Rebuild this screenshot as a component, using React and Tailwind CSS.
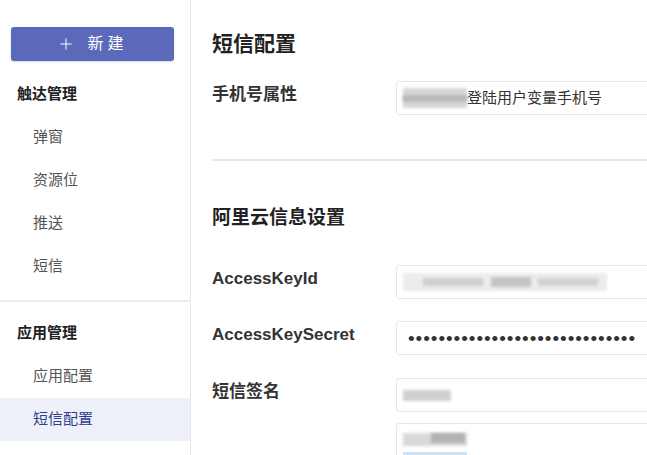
import React from 'react';
import { Plus } from 'lucide-react';

const font = { fontFamily: '"Liberation Sans", "Noto Sans CJK SC", sans-serif' };

const groups = [
  { title: '触达管理', items: ['弹窗', '资源位', '推送', '短信'] },
  { title: '应用管理', items: ['应用配置', '短信配置'] },
];

const Blur = ({ className }) => <div className={`blur-[1.5px] ${className}`} />;

const Field = ({ label, children, className = '' }) => (
  <div className={`flex items-start ${className}`}>
    <div className="w-[184px] shrink-0 text-[17px] leading-[27px] font-semibold text-[#333]">{label}</div>
    <div className="w-[320px] shrink-0 h-[34px] border border-[#e6e6e6] rounded-[3px] bg-white flex items-center pl-[6px]">
      {children}
    </div>
  </div>
);

const Sidebar = () => (
  <div className="w-[191px] shrink-0 border-r border-[#e8e8e8] bg-white">
    <div className="pt-[27px] px-[11px]">
      <button className="w-[163px] h-[34px] rounded-[3px] bg-[#5b69bb] text-white flex items-center justify-center gap-[12px] shadow-[0_1px_2px_rgba(0,0,0,0.15)]">
        <Plus size={18} strokeWidth={1.3} />
        <span className="text-[16px] tracking-[4px]">新建</span>
      </button>
    </div>
    {groups.map((g, gi) => (
      <div key={g.title} className={gi === 0 ? 'mt-[12px] pb-[12px] border-b-2 border-[#ececec]' : 'pt-[10px]'}>
        <div className="h-[43px] flex items-center pl-[17px] text-[15px] font-bold text-[#222]">{g.title}</div>
        {g.items.map((item) => {
          const active = item === '短信配置';
          return (
            <div
              key={item}
              className={`h-[43px] flex items-center pl-[33px] text-[15px] ${active ? 'bg-[#eef1f9] text-[#2f3d8c]' : 'text-[#555]'}`}
            >
              {item}
            </div>
          );
        })}
      </div>
    ))}
  </div>
);

export default function App() {
  return (
    <div className="w-[647px] h-[455px] overflow-hidden flex bg-white" style={font}>
      <Sidebar />
      <div className="flex-1 min-w-0 pl-[21px] pt-[29px]">
        <h1 className="text-[21px] leading-[30px] font-bold text-[#222]">短信配置</h1>

        <Field label="手机号属性" className="mt-[22px]">
          <div className="flex items-center">
            <div className="relative w-[64px] h-[20px]">
              <Blur className="absolute inset-0 bg-[#d6d6d6]" />
              <Blur className="absolute left-0 right-0 top-[7px] h-[7px] bg-[#b9b9b9]" />
            </div>
            <span className="text-[15px] text-[#333]">登陆用户变量手机号</span>
          </div>
        </Field>

        <div className="mt-[44px] border-t-2 border-[#e8e8e8] w-[600px]" />

        <h2 className="mt-[43px] text-[19px] leading-[28px] font-bold text-[#222]">阿里云信息设置</h2>

        <Field label="AccessKeyId" className="mt-[33px]">
          <div className="relative w-[204px] h-[18px]">
            <Blur className="absolute inset-0 bg-[#ececec]" />
            <Blur className="absolute left-[20px] w-[60px] top-[5px] h-[8px] bg-[#cfcfcf]" />
            <Blur className="absolute left-[88px] w-[40px] top-[4px] h-[10px] bg-[#c4c4c4]" />
            <Blur className="absolute left-[135px] w-[60px] top-[5px] h-[8px] bg-[#d2d2d2]" />
          </div>
        </Field>

        <Field label="AccessKeySecret" className="mt-[22px]">
          <span className="pl-[5px] text-[19px] leading-none tracking-[0.95px] text-[#333]">
            {'•'.repeat(30)}
          </span>
        </Field>

        <Field label="短信签名" className="mt-[23px]">
          <Blur className="w-[48px] h-[11px] bg-[#d0d0d0]" />
        </Field>

        <div className="flex mt-[11px]">
          <div className="w-[184px] shrink-0" />
          <div className="w-[320px] shrink-0 h-[34px] border border-[#e6e6e6] rounded-[3px] pl-[6px] pt-[9px]">
            <div className="relative w-[64px] h-[13px]">
              <Blur className="absolute inset-0 bg-[#d9d9d9]" />
              <Blur className="absolute left-[28px] w-[34px] top-0 h-[10px] bg-[#b3b3b3]" />
            </div>
            <div className="mt-[6px] w-[64px] h-[3px] bg-[#cfe3f7]" />
          </div>
        </div>
      </div>
    </div>
  );
}
